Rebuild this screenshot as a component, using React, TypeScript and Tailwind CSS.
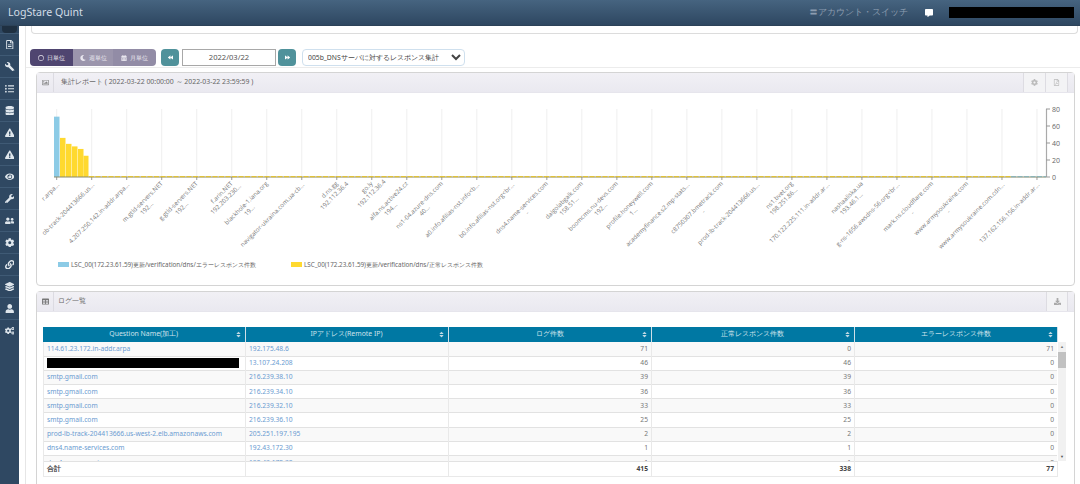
import React from "react";
import {
  FaRegFileAlt, FaWrench, FaListUl, FaDatabase, FaExclamationTriangle, FaEye, FaUserFriends, FaCog, FaLink, FaLayerGroup, FaUser, FaCogs,
  FaRegCircle, FaMoon, FaCalendarAlt, FaBackward, FaForward, FaRegImage, FaRegFilePdf, FaCommentAlt, FaTable, FaDownload, FaSort,
} from "react-icons/fa";

const side = [FaRegFileAlt, FaWrench, FaListUl, FaDatabase, FaExclamationTriangle, FaExclamationTriangle, FaEye, FaWrench, FaUserFriends, FaCog, FaLink, FaLayerGroup, FaUser, FaCogs];

const labels: string[][] = [
  ["r.arpa..."], ["ob-track-204413666.us..."], ["4.207.250.142.in-addr.arpa..."],
  ["m.gtld-servers.NET", "192..."], ["g.gtld-servers.NET", "192..."], ["f.arin.NET", "192.203.230..."],
  ["blackhole-1.iana.org", "19..."], ["navigator-ukraina.com.ua-cb..."], ["d.ns.gg", "192.112.36.4"],
  ["go.ly", "192.112.36.4"], ["alfa.ns.active24.cz", "194..."], ["ns1-04.azure-dns.com", "40..."],
  ["a0.info.afilias-nst.info<b..."], ["b0.info.afilias-nst.org<br..."], ["dns4.name-services.com", "-"],
  ["dalgolabgalk.com", "158.51..."], ["boomcms.nu-devs.com", "192..."], ["profile.honeywell.com", "1..."],
  ["academyfinance.s2.mp-stats..."], ["c8750307.bmetrack.com", "-"], ["prod-lb-track-204413666.us..."],
  ["ns1.bvet.org", "198.251.86..."], ["170.122.225.111.in-addr.ar..."], ["nashaaliska.ua", "193.46.1..."],
  ["g-ns-1656.awsdns-56.org<br..."], ["mark.ns.cloudflare.com", "-"], ["www.armysoukraine.com", "-"],
  ["www.armysoukraine.com.cdn..."], ["137.162.156.156.in-addr.ar..."],
];

const rows: [string, string, number, number, number][] = [
  ["114.61.23.172.in-addr.arpa", "192.175.48.6", 71, 0, 71],
  ["", "13.107.24.208", 46, 46, 0],
  ["smtp.gmail.com", "216.239.38.10", 39, 39, 0],
  ["smtp.gmail.com", "216.239.34.10", 36, 36, 0],
  ["smtp.gmail.com", "216.239.32.10", 33, 33, 0],
  ["smtp.gmail.com", "216.239.36.10", 25, 25, 0],
  ["prod-lb-track-204413666.us-west-2.elb.amazonaws.com", "205.251.197.195", 2, 2, 0],
  ["dns4.name-services.com", "192.43.172.30", 1, 1, 0],
  ["dns4.name-services.com", "192.43.172.30", 1, 1, 0],
];

const bars = [
  { x: 54, w: 5.5, v: 71, c: "#8ccbe6" },
  { x: 60, w: 5.5, v: 46, c: "#ffd92f" },
  { x: 66, w: 5.5, v: 39, c: "#ffd92f" },
  { x: 72, w: 5.5, v: 36, c: "#ffd92f" },
  { x: 78, w: 5.5, v: 33, c: "#ffd92f" },
  { x: 83.5, w: 5, v: 25, c: "#ffd92f" },
];

function Cols() {
  return (
    <colgroup>
      <col className="w-[202px]" />
      <col className="w-[203px]" />
      <col className="w-[203px]" />
      <col className="w-[203px]" />
      <col className="w-[203px]" />
    </colgroup>
  );
}

function Chart() {
  const ticks = labels.map((_, i) => 56.7 + i * 35.01);
  const font = "'Open Sans', sans-serif";
  return (
    <svg width="1037" height="165" className="block">
      <g transform="translate(-37,-93)">
        {ticks.map((x) => (
          <g key={x}>
            <line x1={x} x2={x} y1="109" y2="177" stroke="#efefef" />
            <line x1={x} x2={x} y1="177" y2="180" stroke="#999" />
          </g>
        ))}
        {bars.map((b) => (
          <rect key={b.x} x={b.x} y={177 - b.v * 0.85} width={b.w} height={b.v * 0.85} fill={b.c} />
        ))}
        <line x1="54" x2="1046" y1="177" y2="177" stroke="#8a8a6a" strokeWidth="1" />
        <line x1="89" x2="1011" y1="176.7" y2="176.7" stroke="#e8c21c" strokeWidth="1" strokeDasharray="5 1.5" />
        <line x1="1011" x2="1046" y1="176.7" y2="176.7" stroke="#7fb0b8" strokeWidth="1" strokeDasharray="5 1.5" />
        <line x1="1046.5" x2="1046.5" y1="109" y2="177" stroke="#aaa" strokeWidth="1.2" />
        {[80, 60, 40, 20, 0].map((v) => {
          const y = 177 - v * 0.85;
          return (
            <g key={v}>
              <line x1="1046" x2="1050" y1={y} y2={y} stroke="#999" />
              <text x="1052" y={y + 2.5} fontSize="7" fill="#666" fontFamily={font}>{v}</text>
            </g>
          );
        })}
        {labels.map((l, i) => (
          <g key={i} transform={`translate(${ticks[i] + 1.5},184) rotate(-45)`}>
            {l.length === 1 ? (
              <text x="0" y="2" textAnchor="end" fontSize="6.2" fill="#777" fontFamily={font}>{l[0]}</text>
            ) : (
              <>
                <text x="0" y="0" textAnchor="end" fontSize="6.2" fill="#777" fontFamily={font}>{l[0]}</text>
                <text x={-(l[0].length * 3.2) / 2} y="7.5" textAnchor="middle" fontSize="6.2" fill="#777" fontFamily={font}>{l[1]}</text>
              </>
            )}
          </g>
        ))}
      </g>
    </svg>
  );
}

export default function App() {
  return (
    <div className="flex h-[484px] w-[1080px] flex-col overflow-hidden bg-white font-['Open_Sans','Noto_Sans_CJK_JP',sans-serif] text-[#777]">
      <header className="flex h-[26px] shrink-0 items-center border-b border-[#2c4258] bg-gradient-to-b from-[#466480] to-[#2e4761] pl-[8px]">
        <span className="text-[10.6px] text-[#d3dde7]">LogStare Quint</span>
        <div className="ml-auto flex items-center">
          <span className="text-[8.5px] text-[#8d9db0]">〓アカウント・スイッチ</span>
          <FaCommentAlt className="ml-[17px] text-[8px] text-white" />
          <div className="ml-[16px] mr-[6px] h-[11px] w-[125px] bg-black" />
        </div>
      </header>

      <div className="flex min-h-0 flex-1">
        <aside className="flex w-[19px] shrink-0 flex-col bg-[#2f4862]">
          <div className="mx-[2px] h-[7px] rounded-b-sm bg-[#1f3041]" />
          {side.map((Icon, i) => (
            <div key={i} className="flex h-[22px] shrink-0 items-center justify-center border-t border-[#3f5a75] text-[9.5px] text-[#dfe6ec]">
              <Icon className={i === 1 ? "-scale-x-100" : ""} />
            </div>
          ))}
        </aside>

        <main className="ml-[6px] flex min-w-0 flex-1 flex-col border-l border-[#e6e6e6]">
          <div className="ml-[5px] mr-[2px] h-[8px] shrink-0 rounded-b-sm border-x border-b border-[#dcdcdc]" />

          <div className="mt-[15px] flex h-[17px] shrink-0 items-center pl-[4px]">
            <div className="flex h-[17px] w-[126px] overflow-hidden rounded-sm text-[6.2px] text-[#e8e6ee]">
              <div className="flex w-[43px] items-center justify-center gap-[3px] bg-[#4f4570]"><FaRegCircle className="text-[6px]" />日単位</div>
              <div className="flex w-[40px] items-center justify-center gap-[3px] bg-[#9b95ac]"><FaMoon className="text-[6px]" />週単位</div>
              <div className="flex w-[43px] items-center justify-center gap-[3px] bg-[#928ca6]"><FaCalendarAlt className="text-[6px]" />月単位</div>
            </div>
            <div className="ml-[5px] flex h-[17px] w-[18px] items-center justify-center rounded-sm bg-[#50929b] text-[5px] text-white"><FaBackward /></div>
            <div className="ml-[3px] flex h-[17px] w-[94px] items-center justify-center border border-[#a8a8a8] text-[7.6px] text-[#555]">2022/03/22</div>
            <div className="ml-[2px] flex h-[17px] w-[18px] items-center justify-center rounded-sm bg-[#50929b] text-[5px] text-white"><FaForward /></div>
            <select className="ml-[6px] h-[17px] w-[163px] rounded-sm border border-[#cfe0ee] bg-white px-[1px] text-[6.8px] text-[#444]">
              <option>005b_DNSサーバに対するレスポンス集計</option>
            </select>
          </div>

          <div className="mt-[1px] shrink-0 border-t border-[#ececec] pt-[4px]">
            <section className="ml-[10px] mr-[5px] h-[214px] rounded-sm border border-[#d4d4d4]">
              <div className="flex h-[20px] items-stretch border-b border-[#e6e5ec] bg-gradient-to-b from-[#f1f0f5] to-[#eae9f0]">
                <div className="flex w-[17px] items-center justify-center border-r border-[#dcdbe2] text-[7px] text-[#888]"><FaRegImage /></div>
                <div className="flex items-center pl-[7px] text-[6.9px] text-[#666]">集計レポート ( 2022-03-22 00:00:00 ～ 2022-03-22 23:59:59 )</div>
                <div className="ml-auto mr-[6px] flex">
                  <div className="flex w-[23px] items-center justify-center border-x border-[#dddce2] bg-[#f3f3f5] text-[7px] text-[#bbb]"><FaCog /></div>
                  <div className="flex w-[22px] items-center justify-center border-r border-[#dddce2] bg-[#f3f3f5] text-[7px] text-[#bbb]"><FaRegFilePdf /></div>
                </div>
              </div>
              <Chart />
              <div className="flex pl-[21px] pt-[2px] text-[6.3px] text-[#666]">
                <div className="flex w-[233px] items-center gap-[2px]"><span className="h-[5px] w-[11px] bg-[#8ccbe6]" />LSC_00(172.23.61.59)更新/verification/dns/エラーレスポンス件数</div>
                <div className="flex items-center gap-[2px]"><span className="h-[5px] w-[11px] bg-[#ffd92f]" />LSC_00(172.23.61.59)更新/verification/dns/正常レスポンス件数</div>
              </div>
            </section>

            <section className="ml-[10px] mr-[5px] mt-[5px] h-[200px] rounded-t-sm border border-[#d4d4d4]">
              <div className="flex h-[20px] items-stretch border-b border-[#e6e5ec] bg-gradient-to-b from-[#f1f0f5] to-[#eae9f0]">
                <div className="flex w-[17px] items-center justify-center border-r border-[#dcdbe2] text-[7px] text-[#777]"><FaTable /></div>
                <div className="flex items-center pl-[4px] text-[6.8px] text-[#666]">ログ一覧</div>
                <div className="ml-auto mr-[6px] flex w-[22px] items-center justify-center border-x border-[#dddce2] bg-[#f3f3f5] text-[7px] text-[#aaa]"><FaDownload /></div>
              </div>

              <div className="pl-[6px] pt-[15px] text-[6.7px]">
                <table className="w-[1014px] table-fixed border-collapse">
                  <Cols />
                  <thead>
                    <tr className="h-[15px] bg-[#0078a3] text-[#cfe3ec]">
                      {["Question Name(加工)", "IPアドレス(Remote IP)", "ログ件数", "正常レスポンス件数", "エラーレスポンス件数"].map((h) => (
                        <th key={h} className="relative border-r border-[#cfdfe8] text-center text-[6.9px] font-normal">
                          {h}
                          <FaSort className="absolute right-[3px] top-[4px] text-[7px] text-[#bcd7e3]" />
                        </th>
                      ))}
                    </tr>
                  </thead>
                </table>
                <div className="flex">
                  <div className="h-[119px] w-[1014px] overflow-hidden">
                    <table className="w-[1014px] table-fixed border-collapse">
                      <Cols />
                      <tbody>
                        {rows.map((r, i) => (
                          <tr key={i} className={`h-[14.2px] border-b border-[#e2e2e2] ${i % 2 === 0 ? "bg-[#f9f9f9]" : "bg-white"}`}>
                            <td className="border-x border-[#e9e9e9] px-[3px] text-[#6b9bd1]">
                              {r[0] ? r[0] : <div className="h-[10px] w-[192px] bg-black" />}
                            </td>
                            <td className="border-r border-[#e9e9e9] px-[3px] text-[#6b9bd1]">{r[1]}</td>
                            <td className="border-r border-[#e9e9e9] px-[3px] text-right">{r[2]}</td>
                            <td className="border-r border-[#e9e9e9] px-[3px] text-right">{r[3]}</td>
                            <td className="border-r border-[#e9e9e9] px-[3px] text-right">{r[4]}</td>
                          </tr>
                        ))}
                      </tbody>
                    </table>
                  </div>
                  <div className="relative ml-[1px] h-[119px] w-[8px] bg-[#f1f1f1]">
                    <div className="flex h-[9px] items-center justify-center text-[4px] text-[#777]">▲</div>
                    <div className="mt-[1px] h-[16px] w-[8px] bg-[#c1c1c1]" />
                    <div className="absolute bottom-0 flex h-[9px] w-[8px] items-center justify-center text-[4px] text-[#555]">▼</div>
                  </div>
                </div>
                <table className="w-[1014px] table-fixed border-collapse border-t border-[#e2e2e2]">
                  <Cols />
                  <tbody>
                    <tr className="h-[15px] border-b border-[#e9e9e9] font-bold text-[#444]">
                      <td className="border-x border-[#e9e9e9] px-[3px]">合計</td>
                      <td className="border-r border-[#e9e9e9]" />
                      <td className="border-r border-[#e9e9e9] px-[3px] text-right">415</td>
                      <td className="border-r border-[#e9e9e9] px-[3px] text-right">338</td>
                      <td className="border-r border-[#e9e9e9] px-[3px] text-right">77</td>
                    </tr>
                  </tbody>
                </table>
              </div>
            </section>
          </div>
        </main>
      </div>
    </div>
  );
}
